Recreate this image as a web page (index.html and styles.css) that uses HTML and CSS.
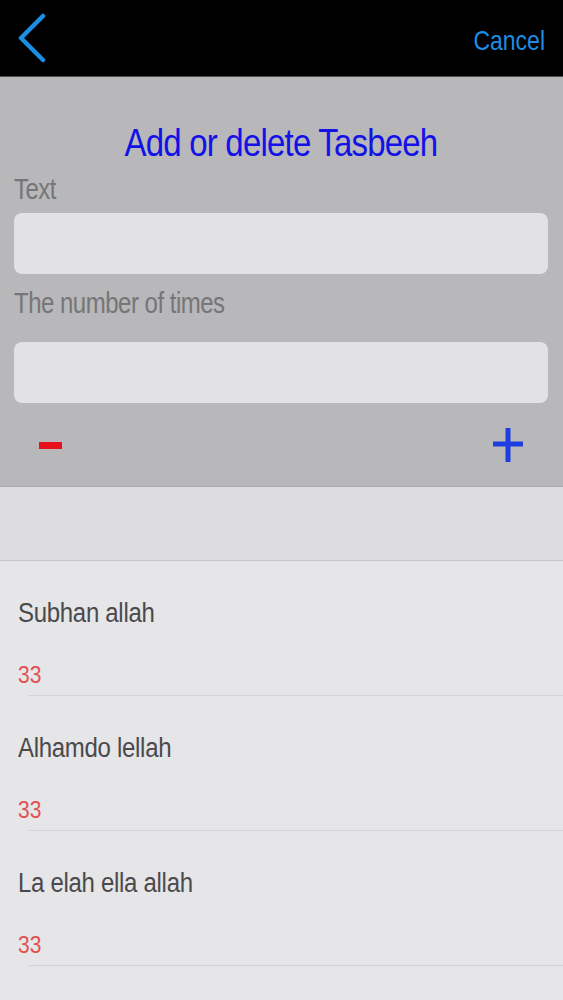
FILE: index.html
```html
<!DOCTYPE html>
<html>
<head>
<meta charset="utf-8">
<link rel="stylesheet" href="styles.css">
</head>
<body>
<div class="screen">
  <header class="topbar">
    <svg class="back" width="28" height="50" viewBox="0 0 28 50"><polyline points="25,3 3,25 25,47" fill="none" stroke="#1a8fe3" stroke-width="4.5" stroke-linecap="round" stroke-linejoin="round"/></svg>
    <span class="cancel">Cancel</span>
  </header>
  <section class="panel">
    <h1 class="title">Add or delete Tasbeeh</h1>
    <div class="label">Text</div>
    <div class="input input-text"></div>
    <div class="label label-count">The number of times</div>
    <div class="input input-count"></div>
    <div class="actions">
      <span class="minus"></span>
      <svg class="plus" width="32" height="38" viewBox="0 0 32 38"><line x1="16" y1="2" x2="16" y2="36" stroke="#1f3ee0" stroke-width="5"/><line x1="1" y1="18" x2="31" y2="18" stroke="#1f3ee0" stroke-width="5"/></svg>
    </div>
  </section>
  <div class="spacer"></div>
  <ul class="list">
    <li class="row">
      <div class="row-title">Subhan allah</div>
      <div class="row-count">33</div>
      <div class="sep"></div>
    </li>
    <li class="row">
      <div class="row-title">Alhamdo lellah</div>
      <div class="row-count">33</div>
      <div class="sep"></div>
    </li>
    <li class="row">
      <div class="row-title">La elah ella allah</div>
      <div class="row-count">33</div>
      <div class="sep"></div>
    </li>
  </ul>
</div>
</body>
</html>
```

FILE: styles.css
```css
html, body {
  margin: 0;
  padding: 0;
  background: #e6e5e7;
  font-family: "Liberation Sans", Arial, sans-serif;
}

.screen {
  width: 563px;
  height: 1000px;
  overflow: hidden;
  background: #e6e5e7;
}

.topbar {
  height: 76px;
  background: #000;
  border-bottom: 1px solid #4a4a4a;
  display: flex;
  align-items: center;
  justify-content: space-between;
  padding: 0 18px 0 18px;
}

.back {
  display: block;
  margin-top: -1px;
}

.cancel {
  display: inline-block;
  color: #1e8ce3;
  font-size: 23px;
  padding-top: 4px;
  transform: scaleY(1.2);
}

.panel {
  background: #b8b7b9;
  padding: 46px 15px 0 14px;
  border-bottom: 1px solid #a9a8aa;
}

.title {
  margin: 0;
  text-align: center;
  font-weight: normal;
  font-size: 33px;
  line-height: 40px;
  letter-spacing: -0.8px;
  color: #1212e6;
  padding-left: 0;
  transform: scaleY(1.18);
}

.label {
  margin-top: 12px;
  font-size: 24px;
  line-height: 28px;
  letter-spacing: -0.5px;
  color: #767577;
  transform: scaleY(1.2);
  transform-origin: left center;
}

.label-count {
  margin-top: 15px;
}

.input {
  height: 61px;
  border-radius: 8px;
  background: #e2e1e3;
}

.input-text {
  margin-top: 10px;
}

.input-count {
  margin-top: 25px;
}

.actions {
  height: 83px;
  display: flex;
  align-items: center;
  justify-content: space-between;
  padding: 0 24px 0 25px;
}

.minus {
  display: block;
  width: 23px;
  height: 7px;
  background: #e8101a;
  margin-top: 2px;
}

.plus {
  display: block;
}

.spacer {
  height: 73px;
  background: #dddcde;
  border-bottom: 1px solid #c7c6c8;
}

.list {
  list-style: none;
  margin: 0;
  padding: 0;
}

.row {
  padding-top: 38px;
}

.row-title {
  padding-left: 18px;
  font-size: 24px;
  line-height: 28px;
  letter-spacing: -0.3px;
  color: #4a4a4c;
  transform: scaleY(1.15);
  transform-origin: left center;
}

.row-count {
  margin-top: 36px;
  padding-left: 18px;
  font-size: 21px;
  line-height: 24px;
  color: #e05252;
  transform: scaleY(1.15);
  transform-origin: left center;
}

.sep {
  margin-top: 8px;
  margin-left: 28px;
  height: 1px;
  background: #d4d3d5;
}
```
